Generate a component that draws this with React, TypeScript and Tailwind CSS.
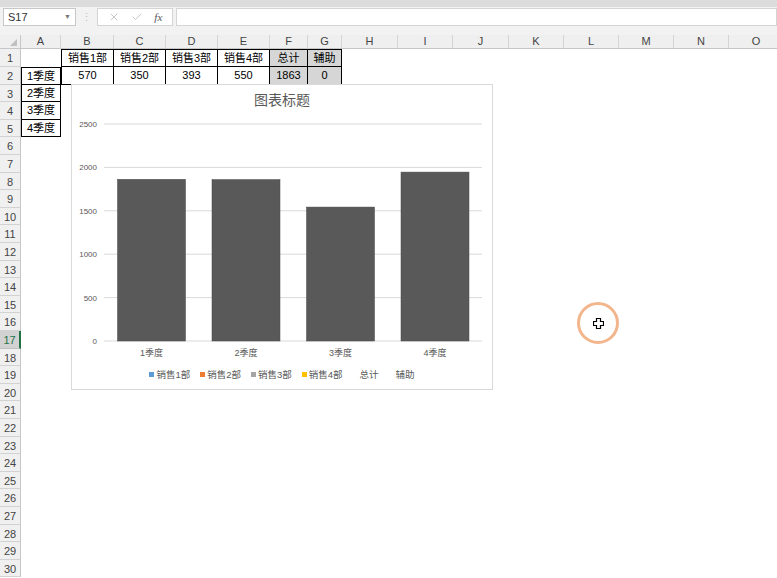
import React from "react";
import { X, Check } from "lucide-react";

const cols = ["A", "B", "C", "D", "E", "F", "G", "H", "I", "J", "K", "L", "M", "N", "O"];
const colW = [
  "w-[40px]", "w-[53px]", "w-[52px]", "w-[52px]", "w-[52px]", "w-[38px]", "w-[34px]",
  "w-[56px]", "w-[55px]", "w-[56px]", "w-[55px]", "w-[55px]", "w-[55px]", "w-[55px]", "w-[55px]",
];

// sheet contents, keyed by row then column index
const data: Record<number, string[]> = {
  1: ["", "销售1部", "销售2部", "销售3部", "销售4部", "总计", "辅助"],
  2: ["1季度", "570", "350", "393", "550", "1863", "0"],
  3: ["2季度"],
  4: ["3季度"],
  5: ["4季度"],
};

const totals = [
  { label: "1季度", value: 1863 },
  { label: "2季度", value: 1860 },
  { label: "3季度", value: 1543 },
  { label: "4季度", value: 1946 },
];

const legend = [
  { name: "销售1部", color: "bg-[#5b9bd5]" },
  { name: "销售2部", color: "bg-[#ed7d31]" },
  { name: "销售3部", color: "bg-[#a5a5a5]" },
  { name: "销售4部", color: "bg-[#ffc000]" },
  { name: "总计", color: "bg-transparent" },
  { name: "辅助", color: "bg-transparent" },
];

function cellBorder(r: number, c: number) {
  // B1:G2 block
  if (r <= 2 && c >= 1 && c <= 6) {
    let cls = "border-b border-r border-black";
    if (r === 1) cls += " border-t";
    if (c === 1) cls += " border-l";
    if (c >= 5) cls += " bg-[#d6d6d6]";
    return cls;
  }
  // A2:A5 labels
  if (r >= 2 && r <= 5 && c === 0) {
    let cls = "border-b border-r border-l border-black";
    if (r === 2) cls += " border-t";
    return cls;
  }
  return "";
}

function FormulaBar() {
  return (
    <div className="h-[28px] bg-[#f2f2f2] flex items-start pt-[1px]">
      <div className="ml-[3px] w-[73px] h-[18px] bg-white border border-[#c8c8c8] flex items-center justify-between px-[4px]">
        <span className="text-[11px] text-[#333]">S17</span>
        <span className="text-[7px] text-[#777]">▼</span>
      </div>
      <div className="w-[21px] h-[18px] flex items-center justify-center text-[11px] text-[#bdbdbd]">⋮</div>
      <div className="w-[76px] h-[18px] bg-white border border-[#d4d4d4] flex items-center justify-around px-[4px]">
        <X className="w-[12px] h-[12px] text-[#b5b5b5]" strokeWidth={1.5} />
        <Check className="w-[12px] h-[12px] text-[#b5b5b5]" strokeWidth={1.5} />
        <span className="font-['Liberation_Serif',serif] italic text-[11px] text-[#555]">fx</span>
      </div>
      <div className="ml-[3px] flex-1 h-[18px] bg-white border border-[#d4d4d4]" />
    </div>
  );
}

function HeaderRow() {
  return (
    <div className="flex h-[14px] bg-[#efefef] border-b border-[#c6c6c6]">
      <div className="w-[21px] shrink-0 border-r border-[#c6c6c6] flex items-end justify-end pr-[3px] pb-[2px]">
        <div className="w-0 h-0 border-l-[7px] border-l-transparent border-b-[7px] border-b-[#c0c0c0]" />
      </div>
      {cols.map((l, i) => (
        <div
          key={l}
          className={`${colW[i]} shrink-0 border-r border-[#d4d4d4] flex items-center justify-center text-[11px] text-[#444] leading-none`}
        >
          {l}
        </div>
      ))}
    </div>
  );
}

function SheetRow({ r }: { r: number }) {
  const h = r % 5 === 3 || r % 5 === 0 ? "h-[17px]" : "h-[18px]";
  const sel = r === 17;
  const vals = data[r] || [];
  return (
    <div className={`flex ${h}`}>
      <div
        className={`w-[21px] shrink-0 flex items-center justify-center pt-[2px] text-[11px] leading-none border-b ${
          sel
            ? "bg-[#d2d2d2] border-[#c0c0c0] border-r-2 border-r-[#217346] text-[#217346]"
            : "bg-[#f0f0f0] border-[#d2d2d2] border-r border-r-[#c6c6c6] text-[#444]"
        }`}
      >
        {r}
      </div>
      {cols.map((l, c) => (
        <div
          key={l}
          className={`${colW[c]} shrink-0 flex items-center justify-center text-[11px] text-black leading-none ${cellBorder(r, c)}`}
        >
          {vals[c] || ""}
        </div>
      ))}
    </div>
  );
}

function Chart() {
  const ticks = [0, 500, 1000, 1500, 2000, 2500];
  const y0 = 230;
  const k = 217 / 2500;
  return (
    <div className="absolute left-[71px] top-[84px] w-[422px] h-[306px] bg-white border border-[#d9d9d9] flex flex-col">
      <div className="h-[26px] pt-[5px] text-center text-[14px] leading-[20px] text-[#595959]">图表标题</div>
      <svg width="420" height="255" className="block">
        {ticks.map((t) => (
          <g key={t}>
            <line x1="32" x2="410" y1={y0 - t * k} y2={y0 - t * k} stroke="#d9d9d9" strokeWidth="1" />
            <text x="25" y={y0 - t * k + 3} textAnchor="end" fontSize="8" fill="#595959">
              {t}
            </text>
          </g>
        ))}
        {totals.map((d, i) => {
          const x = 32 + i * 94.5 + 13.5;
          const top = y0 - d.value * k;
          return (
            <g key={d.label}>
              <rect x={x} y={top} width="68" height={y0 - top} fill="#595959" stroke="#4a4a4a" strokeWidth="0.5" />
              <text x={x + 34} y="245" textAnchor="middle" fontSize="9" fill="#595959">
                {d.label}
              </text>
            </g>
          );
        })}
      </svg>
      <div className="h-[17px] flex items-center justify-center gap-[10px] text-[9.5px] text-[#595959] leading-none">
        {legend.map((l) => (
          <div key={l.name} className="flex items-center">
            <span className={`w-[5px] h-[5px] mr-[2px] ${l.color}`} />
            <span>{l.name}</span>
          </div>
        ))}
      </div>
    </div>
  );
}

export default function App() {
  const rows = Array.from({ length: 30 }, (_, i) => i + 1);
  return (
    <div className="relative w-[777px] h-[578px] overflow-hidden bg-white font-['Liberation_Sans','Noto_Sans_CJK_SC',sans-serif]">
      <div className="h-[7px] bg-[#dcdcdc]" />
      <FormulaBar />
      <HeaderRow />
      {rows.map((r) => (
        <SheetRow key={r} r={r} />
      ))}
      <Chart />
      {/* click highlight around the cursor */}
      <div className="absolute left-[577px] top-[302px] w-[42px] h-[42px] rounded-full border-[3px] border-[#f2b58c] flex items-center justify-center">
        <svg width="11" height="11" viewBox="0 0 11 11">
          <path d="M3.5 0.5h4v3h3v4h-3v3h-4v-3h-3v-4h3z" fill="white" stroke="black" strokeWidth="1.2" />
        </svg>
      </div>
    </div>
  );
}
